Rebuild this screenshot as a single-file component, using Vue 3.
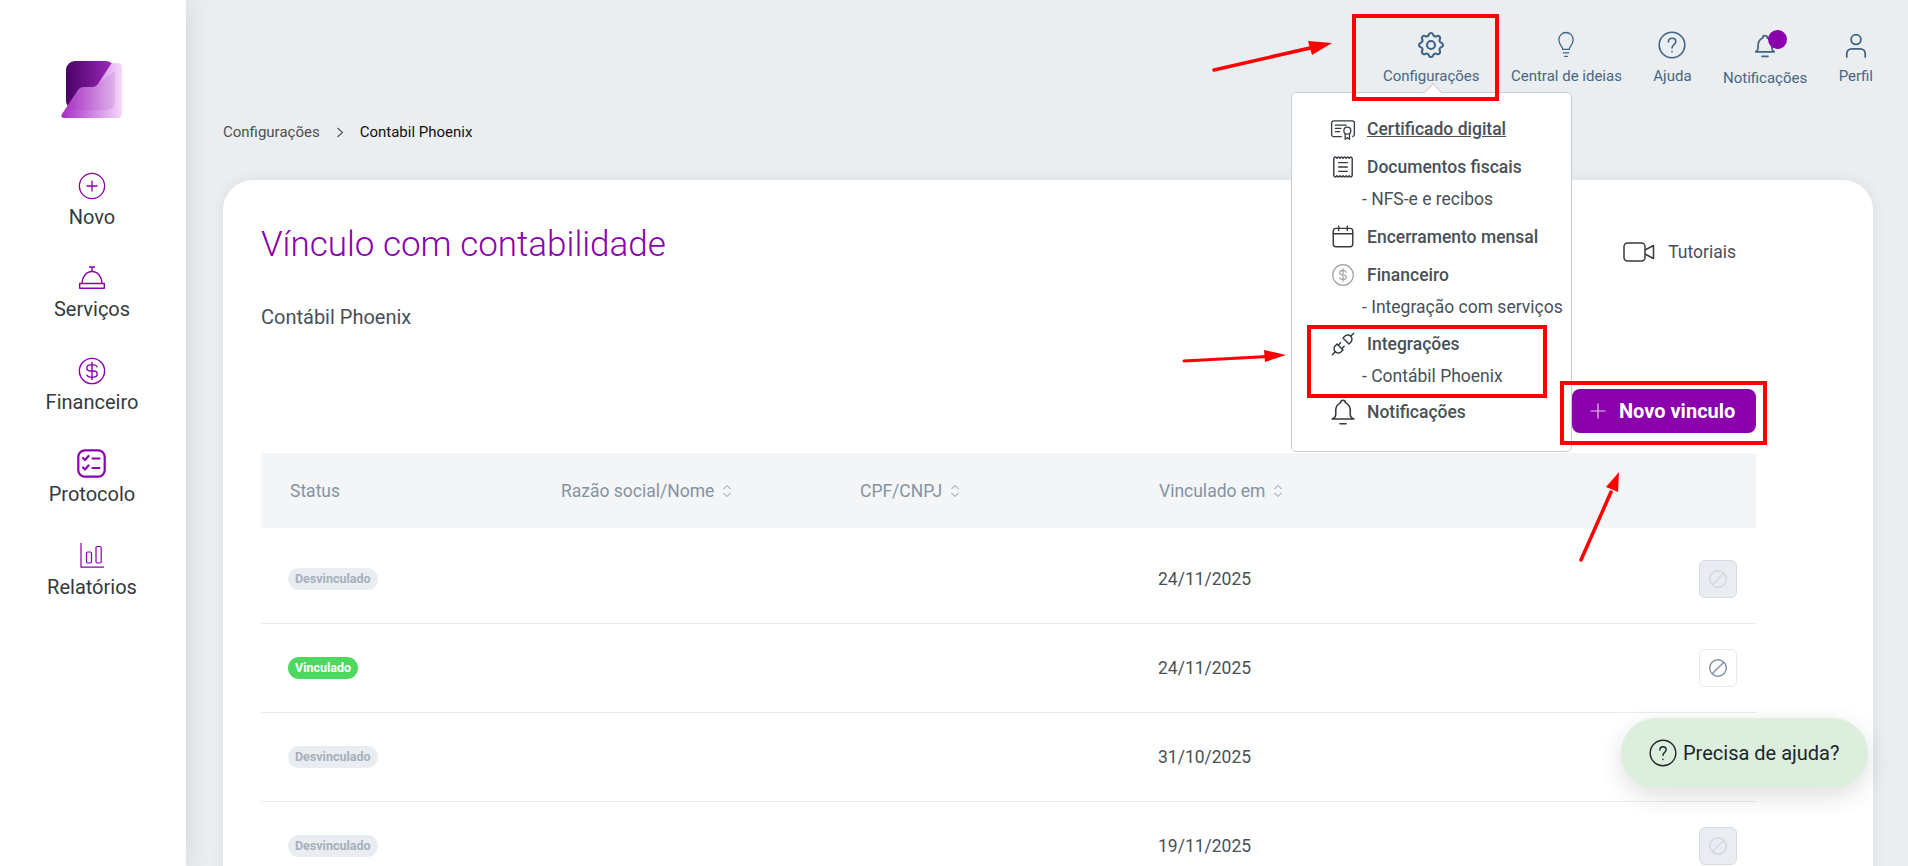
<script setup>
const sideItems = [
  { label: "Novo", icon: "novo" },
  { label: "Serviços", icon: "servicos" },
  { label: "Financeiro", icon: "financeiro" },
  { label: "Protocolo", icon: "protocolo" },
  { label: "Relatórios", icon: "relatorios" },
];

const rows = [
  { status: "Desvinculado", date: "24/11/2025", active: false },
  { status: "Vinculado", date: "24/11/2025", active: true },
  { status: "Desvinculado", date: "31/10/2025", active: false },
  { status: "Desvinculado", date: "19/11/2025", active: false },
];
</script>

<template>
  <div class="page">
    <aside class="sidebar">
      <svg class="logo" width="62" height="58" viewBox="0 0 62 58">
        <defs>
          <linearGradient id="logoDark" x1="0" y1="0" x2="1" y2="0">
            <stop offset="0" stop-color="#4a0066" />
            <stop offset="1" stop-color="#a02dc0" />
          </linearGradient>
          <linearGradient id="logoLight" x1="0" y1="0" x2="1" y2="0">
            <stop offset="0" stop-color="#a52cc4" />
            <stop offset="1" stop-color="#f5d8fc" />
          </linearGradient>
        </defs>
        <rect x="5" y="0" width="49" height="49" rx="9" fill="url(#logoDark)" />
        <path d="M1 53 L17 29 Q19 26 23 26 H32 Q35 26 37 23 L50 3 Q51 2 56 2 Q61 2 61 6 V53 Q61 57 57 57 H3 Q-1 57 1 53 Z" fill="url(#logoLight)" />
        <path d="M54 10 V40 Q54 49 45 49 H6 L17 29 Q19 26 23 26 H32 Q35 26 37 23 Z" fill="#8a20a8" opacity="0.12" />
      </svg>
      <nav class="side-nav">
        <a v-for="item in sideItems" :key="item.label" class="side-item">
          <span class="side-icon">
            <svg v-if="item.icon === 'novo'" width="28" height="28" viewBox="0 0 28 28" fill="none" stroke="#8a00ad" stroke-width="1.3">
              <circle cx="14" cy="14" r="12.6" />
              <path d="M14 8.5v11M8.5 14h11" />
            </svg>
            <svg v-else-if="item.icon === 'servicos'" width="28" height="24" viewBox="0 0 28 24" fill="none" stroke="#8a00ad" stroke-width="1.4">
              <path d="M11 1h6M14 1v4" />
              <path d="M4 17c0-6 4.500-11.500 10-11.500S24 11 24 17" />
              <path d="M1.700 17.500h24.600v4.800H1.700z" stroke-linejoin="round" />
            </svg>
            <svg v-else-if="item.icon === 'financeiro'" width="28" height="28" viewBox="0 0 28 28" fill="none" stroke="#8a00ad" stroke-width="1.4" stroke-linecap="round">
              <circle cx="14" cy="14" r="12.6" />
              <path d="M19 9.800c-.6-1.300-1.800-1.900-3.300-1.900h-3.300c-2 0-3.500 1.300-3.500 3s1.500 3.100 3.500 3.100h3.300c2 0 3.500 1.400 3.500 3.100s-1.500 3-3.500 3h-3.400c-1.500 0-2.700-.6-3.300-1.900M14 5.500v17" />
            </svg>
            <svg v-else-if="item.icon === 'protocolo'" width="29" height="29" viewBox="0 0 29 29" fill="none" stroke="#8a00ad" stroke-width="2.200" stroke-linecap="round" stroke-linejoin="round">
              <rect x="1.300" y="1.300" width="26.400" height="26.400" rx="6.500" />
              <path d="M6 9l2 2 3.500-4M6 18.500l2 2 3.500-4M15.500 9.500h7M15.500 19h7" />
            </svg>
            <svg v-else width="24" height="25" viewBox="0 0 24 25" fill="none" stroke="#8a00ad" stroke-width="1.200">
              <path d="M1 0v24.200h23" />
              <rect x="6.500" y="9" width="5" height="11" rx="1.200" />
              <rect x="16" y="3.500" width="5.200" height="16.500" rx="1.200" />
            </svg>
          </span>
          <span class="side-label">{{ item.label }}</span>
        </a>
      </nav>
    </aside>

    <main class="content">
      <header class="topbar">
        <a class="top-item">
          <span class="top-icon">
            <svg width="32" height="32" viewBox="0 0 24 24" fill="none" stroke="#3f6384" stroke-width="1.600" stroke-linejoin="round">
              <path d="M10.325 4.317c.426 -1.756 2.924 -1.756 3.35 0a1.724 1.724 0 0 0 2.573 1.066c1.543 -.94 3.31 .826 2.37 2.37a1.724 1.724 0 0 0 1.065 2.572c1.756 .426 1.756 2.924 0 3.35a1.724 1.724 0 0 0 -1.066 2.573c.94 1.543 -.826 3.31 -2.37 2.37a1.724 1.724 0 0 0 -2.572 1.065c-.426 1.756 -2.924 1.756 -3.35 0a1.724 1.724 0 0 0 -2.573 -1.066c-1.543 .94 -3.31 -.826 -2.37 -2.37a1.724 1.724 0 0 0 -1.065 -2.572c-1.756 -.426 -1.756 -2.924 0 -3.35a1.724 1.724 0 0 0 1.066 -2.573c-.94 -1.543 .826 -3.31 2.37 -2.37c1 .608 2.296 .07 2.572 -1.065z" />
              <circle cx="12" cy="12" r="3" />
            </svg>
          </span>
          <span>Configurações</span>
        </a>
        <a class="top-item">
          <span class="top-icon">
            <svg width="30" height="30" viewBox="0 0 24 24" fill="none" stroke="#3f6384" stroke-width="1" stroke-linecap="round">
              <path d="M9.500 15.500c0-2-3.200-3.500-3.200-7.800a5.700 5.700 0 0 1 11.400 0c0 4.300-3.200 5.800-3.200 7.800" />
              <path d="M9.500 15.500h5M9.800 18.300h4.400M10.800 21h2.400" />
            </svg>
          </span>
          <span>Central de ideias</span>
        </a>
        <a class="top-item">
          <span class="top-icon">
            <svg width="28" height="28" viewBox="0 0 28 28" fill="none" stroke="#3f6384" stroke-width="1.600" stroke-linecap="round">
              <circle cx="14" cy="14" r="12.800" />
              <path d="M10.400 11c0-2.200 1.600-3.700 3.700-3.700s3.700 1.500 3.700 3.400c0 3-3.800 3-3.800 6.300" />
              <path d="M14 20.600v.2" />
            </svg>
          </span>
          <span>Ajuda</span>
        </a>
        <a class="top-item top-item-notify">
          <span class="top-icon">
            <svg width="28" height="30" viewBox="0 0 24 26" fill="none" stroke="#3f6384" stroke-width="1.500" stroke-linejoin="round" stroke-linecap="round">
              <path d="M10 6a2 2 0 1 1 4 0a7 7 0 0 1 4 6v3a4 4 0 0 0 2 3h-16a4 4 0 0 0 2 -3v-3a7 7 0 0 1 4 -6" />
              <path d="M9.500 22h5" />
            </svg>
            <span class="notify-dot"></span>
          </span>
          <span>Notificações</span>
        </a>
        <a class="top-item">
          <span class="top-icon">
            <svg width="26" height="30" viewBox="0 0 24 26" fill="none" stroke="#3f6384" stroke-width="1.600" stroke-linecap="round">
              <circle cx="12" cy="8" r="4.500" />
              <path d="M3.500 24v-3a4.500 4.500 0 0 1 4.500-4.500h8a4.500 4.500 0 0 1 4.500 4.500v3" />
            </svg>
          </span>
          <span>Perfil</span>
        </a>
      </header>

      <div class="breadcrumb">
        <span class="crumb">Configurações</span>
        <svg width="8" height="11" viewBox="0 0 8 11" fill="none" stroke="#495057" stroke-width="1.100"><path d="M1.500 1l5 4.500-5 4.500" /></svg>
        <span class="crumb-current">Contabil Phoenix</span>
      </div>

      <section class="card">
        <div class="title-row">
          <h1 class="title">Vínculo com contabilidade</h1>
          <a class="tutorials">
            <svg width="32" height="20" viewBox="0 0 32 20" fill="none" stroke="#343a40" stroke-width="1.500" stroke-linejoin="round">
              <rect x="1" y="1" width="21" height="18" rx="3.500" />
              <path d="M22 8l8.500-4.500v13L22 12" />
            </svg>
            <span>Tutoriais</span>
          </a>
        </div>
        <p class="subtitle">Contábil Phoenix</p>

        <div class="actions">
          <button class="new-btn">
            <svg width="16" height="16" viewBox="0 0 16 16" stroke="#e9c8f2" stroke-width="1.200"><path d="M8 .500v15M.500 8h15" /></svg>
            <span>Novo vinculo</span>
          </button>
        </div>

        <div class="table">
          <div class="table-head">
            <span>Status</span>
            <span class="sortable">Razão social/Nome
              <svg width="10" height="14" viewBox="0 0 10 14" fill="none" stroke="#8493a2" stroke-width="1"><path d="M1.500 5L5 1.500 8.500 5M1.500 9L5 12.500 8.500 9" /></svg>
            </span>
            <span class="sortable">CPF/CNPJ
              <svg width="10" height="14" viewBox="0 0 10 14" fill="none" stroke="#8493a2" stroke-width="1"><path d="M1.500 5L5 1.500 8.500 5M1.500 9L5 12.500 8.500 9" /></svg>
            </span>
            <span class="sortable">Vinculado em
              <svg width="10" height="14" viewBox="0 0 10 14" fill="none" stroke="#8493a2" stroke-width="1"><path d="M1.500 5L5 1.500 8.500 5M1.500 9L5 12.500 8.500 9" /></svg>
            </span>
            <span></span>
          </div>
          <div v-for="(row, index) in rows" :key="index" class="table-row">
            <span><span class="pill" :class="{ 'pill-on': row.active }">{{ row.status }}</span></span>
            <span></span>
            <span></span>
            <span class="date">{{ row.date }}</span>
            <span class="row-action">
              <button class="icon-btn" :class="{ 'icon-btn-on': row.active }">
                <svg width="20" height="20" viewBox="0 0 20 20" fill="none" stroke="currentColor" stroke-width="1.400">
                  <circle cx="10" cy="10" r="8.300" />
                  <path d="M4.200 15.800L15.800 4.200" />
                </svg>
              </button>
            </span>
          </div>
        </div>
      </section>
    </main>

    <div class="menu">
      <span class="menu-notch"></span>
      <a class="menu-item">
        <svg width="26" height="26" viewBox="0 0 24 24" fill="none" stroke="#343a40" stroke-width="1.200" stroke-linecap="round" stroke-linejoin="round">
          <circle cx="16" cy="13.500" r="3.200" />
          <path d="M14 16.500v5l2-1.500 2 1.500v-5" />
          <path d="M10.500 19h-7a2 2 0 0 1-2-2V6.500a2 2 0 0 1 2-2h17a2 2 0 0 1 2 2V17a2 2 0 0 1-1.500 1.900" />
          <path d="M5 8.500h10M5 11.500h5M5 14.500h4" />
        </svg>
        <span class="menu-text underlined">Certificado digital</span>
      </a>
      <a class="menu-item menu-gap">
        <svg width="26" height="26" viewBox="0 0 24 24" fill="none" stroke="#343a40" stroke-width="1.300" stroke-linecap="round" stroke-linejoin="round">
          <path d="M3.500 20V4q1.400-2.600 2.800 0q1.400-2.600 2.850 0q1.400-2.600 2.850 0q1.400-2.600 2.850 0q1.400-2.600 2.850 0q1.400-2.600 2.800 0V20q-1.400 2.600-2.800 0q-1.400 2.600-2.850 0q-1.400 2.600-2.850 0q-1.400 2.600-2.850 0q-1.400 2.600-2.850 0q-1.400 2.600-2.800 0z" />
          <path d="M8 8h8M8 12h8M8 16h8" />
        </svg>
        <span class="menu-text">Documentos fiscais</span>
      </a>
      <a class="menu-sub">- NFS-e e recibos</a>
      <a class="menu-item menu-gap">
        <svg width="26" height="26" viewBox="0 0 24 24" fill="none" stroke="#343a40" stroke-width="1.300" stroke-linecap="round">
          <rect x="3" y="4" width="18" height="17" rx="2.500" />
          <path d="M3 9h18M8 2v4M16 2v4" />
        </svg>
        <span class="menu-text">Encerramento mensal</span>
      </a>
      <a class="menu-item menu-gap">
        <svg width="26" height="26" viewBox="0 0 24 24" fill="none" stroke="#a3a3a3" stroke-width="1.100" stroke-linecap="round">
          <circle cx="12" cy="12" r="9.500" />
          <path d="M15 9.500c-.3-1-1.200-1.500-2.200-1.500h-1.600c-1.300 0-2.200 .9-2.200 2s.9 2 2.200 2h1.600c1.300 0 2.200 .9 2.200 2s-.9 2-2.200 2h-1.600c-1 0-1.900-.5-2.200-1.500M12 6v12" />
        </svg>
        <span class="menu-text">Financeiro</span>
      </a>
      <a class="menu-sub">- Integração com serviços</a>
      <a class="menu-item menu-gap-sm">
        <svg width="26" height="26" viewBox="1 1 22 22" fill="none" stroke="#343a40" stroke-width="1.200" stroke-linecap="round" stroke-linejoin="round">
          <path d="M7 12l5 5l-1.500 1.500a3.536 3.536 0 1 1 -5 -5l1.500 -1.500z" />
          <path d="M17 12l-5 -5l1.500 -1.500a3.536 3.536 0 1 1 5 5l-1.500 1.500z" />
          <path d="M3 21l2.500 -2.500M18.500 5.500l2.500 -2.500M10 11l-2 2M13 14l-2 2" />
        </svg>
        <span class="menu-text">Integrações</span>
      </a>
      <a class="menu-sub">- Contábil Phoenix</a>
      <a class="menu-item menu-gap-sm">
        <svg width="26" height="26" viewBox="1.500 1 21 21.500" fill="none" stroke="#343a40" stroke-width="1.300" stroke-linecap="round" stroke-linejoin="round">
          <path d="M10 4a2 2 0 1 1 4 0a7 7 0 0 1 4 6v4a4 4 0 0 0 3 3.500h-18a4 4 0 0 0 3 -3.500v-4a7 7 0 0 1 4 -6" />
          <path d="M9.500 21.500h5" />
        </svg>
        <span class="menu-text">Notificações</span>
      </a>
    </div>

    <button class="help">
      <svg width="28" height="28" viewBox="0 0 28 28" fill="none" stroke="#212529" stroke-width="1.400" stroke-linecap="round">
        <circle cx="14" cy="14" r="12.800" />
        <path d="M10.800 11c0-2 1.400-3.300 3.200-3.300s3.200 1.300 3.200 3c0 2.700-3.300 2.700-3.300 5.700" />
        <path d="M13.900 20.300v.2" />
      </svg>
      <span>Precisa de ajuda?</span>
    </button>

    <svg class="marks" width="1908" height="866" viewBox="0 0 1908 866" fill="none">
      <rect x="1354" y="16" width="143" height="83" stroke="#f00" stroke-width="4" />
      <rect x="1309" y="327" width="236" height="69" stroke="#f00" stroke-width="4" />
      <rect x="1562" y="383" width="203" height="60" stroke="#f00" stroke-width="4" />
      <path d="M1214 70L1310 48" stroke="#f00" stroke-width="3.500" stroke-linecap="round" />
      <path d="M1332 43L1308 41L1312 55Z" fill="#f00" />
      <path d="M1184 361L1268 356.500" stroke="#f00" stroke-width="3" stroke-linecap="round" />
      <path d="M1286 355L1264 350L1265 362Z" fill="#f00" />
      <path d="M1581 560L1611 492" stroke="#f00" stroke-width="3.500" stroke-linecap="round" />
      <path d="M1619 472L1606 487L1618 492Z" fill="#f00" />
    </svg>
  </div>
</template>

<style scoped>
.page {
  position: relative;
  display: flex;
  width: 1908px;
  height: 866px;
  overflow: hidden;
  background: #eaeef1;
  font-family: Roboto, "Liberation Sans", sans-serif;
  color: #495057;
}

a {
  color: inherit;
  text-decoration: none;
}

.sidebar {
  position: relative;
  z-index: 2;
  flex: 0 0 186px;
  box-sizing: border-box;
  display: flex;
  flex-direction: column;
  align-items: center;
  padding: 61px 2px 0 0;
  background: #fff;
  box-shadow: 0 0 24px rgba(52, 58, 64, 0.14);
}

.logo {
  display: block;
  flex: none;
}

.side-nav {
  display: flex;
  flex-direction: column;
  align-items: center;
  margin-top: 52px;
}

.side-item {
  display: flex;
  flex-direction: column;
  align-items: center;
  height: 92.400px;
}

.side-icon {
  display: flex;
  align-items: center;
  justify-content: center;
  height: 30px;
}

.side-label {
  margin-top: 4px;
  font-size: 20px;
  line-height: 24px;
  color: #343a40;
}

.content {
  flex: 1;
  min-width: 0;
  padding: 0 35px 0 37px;
}

.topbar {
  display: flex;
  justify-content: flex-end;
  gap: 31.400px;
  padding-top: 30px;
  color: #456785;
  font-size: 15px;
}

.top-item {
  display: flex;
  flex-direction: column;
  align-items: center;
}

.top-item > span:last-child {
  margin-top: 6px;
  line-height: 20px;
}

.top-icon {
  position: relative;
  display: flex;
  align-items: center;
  justify-content: center;
  height: 30px;
}

.top-item-notify .top-icon {
  height: 32px;
}

.notify-dot {
  position: absolute;
  top: 0;
  left: 17px;
  width: 19px;
  height: 19px;
  border-radius: 50%;
  background: #8a00ad;
}

.breadcrumb {
  display: flex;
  align-items: center;
  gap: 16px;
  margin-top: 33px;
  font-size: 15px;
  line-height: 22px;
}

.crumb-current {
  color: #111;
}

.card {
  height: 720px;
  margin-top: 37px;
  padding: 41px 117px 0 38px;
  border-radius: 30px;
  background: #fff;
  box-shadow: 0 0 14px rgba(52, 58, 64, 0.08);
}

.title-row {
  display: flex;
  justify-content: space-between;
  align-items: flex-start;
}

.title {
  margin: 0;
  font-size: 35px;
  font-weight: 300;
  line-height: 48px;
  color: #8a00ad;
}

.tutorials {
  display: flex;
  align-items: center;
  gap: 13px;
  margin: 18px 20px 0 0;
  font-size: 17.500px;
  line-height: 26px;
}

.subtitle {
  margin: 35px 0 0;
  font-size: 20px;
  line-height: 26px;
}

.actions {
  display: flex;
  justify-content: flex-end;
  margin-top: 59px;
}

.new-btn {
  display: flex;
  align-items: center;
  gap: 13px;
  width: 184px;
  height: 44px;
  padding: 0 0 0 18px;
  border: 0;
  border-radius: 8px;
  background: #8a00ad;
  color: #fff;
  font-family: inherit;
  font-size: 20px;
  font-weight: 700;
}

.table {
  margin-top: 20px;
}

.table-head,
.table-row {
  display: grid;
  grid-template-columns: 271px 299px 299px 1fr 57px;
  align-items: center;
  padding-left: 27px;
  box-sizing: border-box;
}

.table-head {
  height: 75px;
  padding-left: 29px;
  background: #f4f5f7;
  color: #8493a2;
  font-size: 17.500px;
}

.sortable {
  display: flex;
  align-items: center;
  gap: 8px;
}

.table-row {
  height: 89px;
  border-bottom: 1px solid #e9ecef;
  grid-template-columns: 272px 299px 299px 1fr 57px;
}

.table-head + .table-row {
  margin-top: 7px;
}

.pill {
  display: inline-block;
  height: 22px;
  padding: 0 7px;
  border-radius: 11px;
  background: #e9edf1;
  color: #a5b0bb;
  font-size: 12.500px;
  font-weight: 700;
  line-height: 22px;
}

.pill-on {
  background: #4fd85f;
  color: #fff;
}

.date {
  font-size: 17.500px;
}

.row-action {
  display: flex;
}

.icon-btn {
  display: flex;
  align-items: center;
  justify-content: center;
  width: 38px;
  height: 38px;
  padding: 0;
  border: 1px solid #d6dce1;
  border-radius: 6px;
  background: #e9edf1;
  color: #d1d7db;
}

.icon-btn-on {
  border-color: #e6e9ec;
  background: #fff;
  color: #7e90a8;
}

.menu {
  position: absolute;
  z-index: 3;
  top: 92px;
  left: 1291px;
  width: 281px;
  height: 360px;
  padding-top: 20px;
  box-sizing: border-box;
  border: 1px solid #c6ccd2;
  border-radius: 5px;
  background: #fff;
}

.menu-notch {
  position: absolute;
  top: -7px;
  left: 134px;
  width: 13px;
  height: 13px;
  border-top: 1px solid #c6ccd2;
  border-left: 1px solid #c6ccd2;
  background: #fff;
  transform: rotate(45deg);
}

.menu-item {
  display: flex;
  align-items: center;
  gap: 11px;
  height: 32px;
  padding-left: 38px;
}

.menu-item svg {
  flex: none;
}

.menu-gap {
  margin-top: 6px;
}

.menu-gap-sm {
  margin-top: 4.500px;
}

.menu-text {
  font-size: 17.500px;
  font-weight: 500;
}

.underlined {
  text-decoration: underline;
}

.menu-sub {
  display: block;
  padding-left: 70px;
  font-size: 17.500px;
  line-height: 32px;
}

.help {
  position: absolute;
  z-index: 3;
  top: 718px;
  left: 1621px;
  display: flex;
  align-items: center;
  gap: 6px;
  width: 247px;
  height: 70px;
  padding: 0 0 0 28px;
  border: 0;
  border-radius: 35px;
  background: #dcefdd;
  box-shadow: 0 8px 24px rgba(52, 58, 64, 0.16);
  color: #212529;
  font-family: inherit;
  font-size: 20px;
}

.marks {
  position: absolute;
  z-index: 4;
  top: 0;
  left: 0;
  pointer-events: none;
}
</style>
